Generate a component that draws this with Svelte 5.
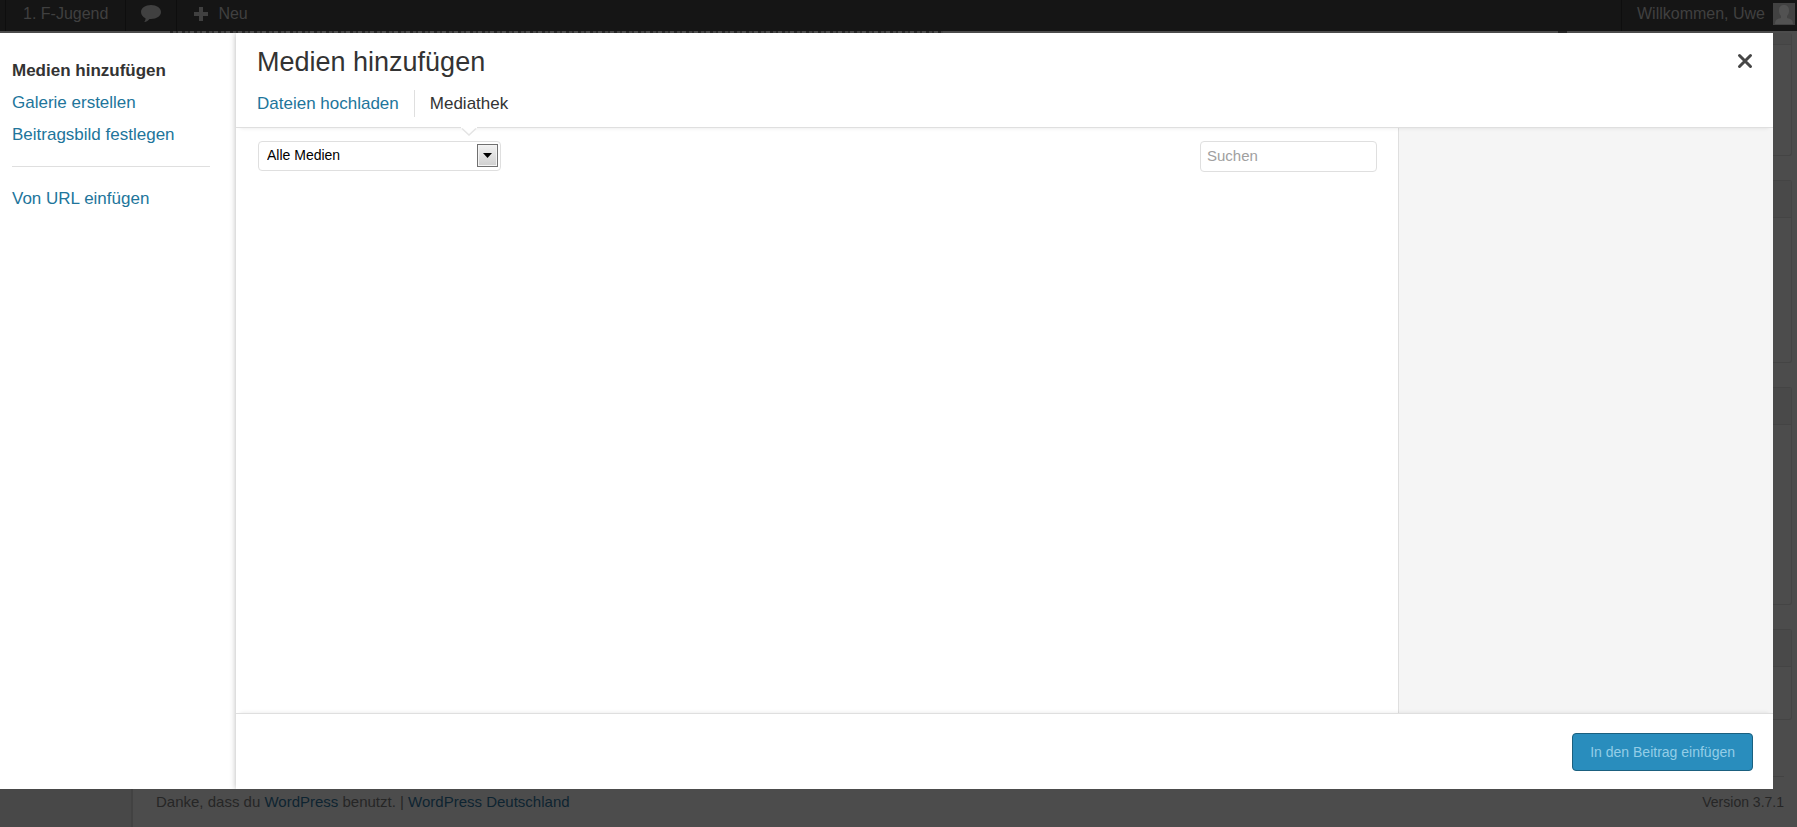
<script>
    let menuItems = [
        { id: 'insert', label: 'Medien hinzufügen' },
        { id: 'gallery', label: 'Galerie erstellen' },
        { id: 'featured', label: 'Beitragsbild festlegen' }
    ];

    let tabs = [
        { id: 'upload', label: 'Dateien hochladen' },
        { id: 'library', label: 'Mediathek' }
    ];

    // Dimmed sidebar widgets next to the dialog: title bar and total height
    let widgets = [
        { title: 12, height: 123 },
        { title: 37, height: 183 },
        { title: 37, height: 218 },
        { title: 37, height: 91 }
    ];

    let activeItem = $state('insert');
    let activeTab = $state('library');
    let filter = $state('all');
    let search = $state('');
</script>

<div class="page">
    <header class="adminbar">
        <a class="bar-item site" href="#site">1. F-Jugend</a>
        <a class="bar-item comments" href="#comments" aria-label="Kommentare">
            <svg width="20" height="17" viewBox="0 0 20 17">
                <path d="M10 0C4.400 0 0 3 0 7c0 3 2 5 4.500 6.200C4.600 14.800 4 16 3.200 17c2.400-.3 4.300-1.500 5.300-3.100H10c5.600 0 10-2.900 10-6.900S15.600 0 10 0z" />
            </svg>
        </a>
        <a class="bar-item new" href="#new">
            <svg width="14" height="14" viewBox="0 0 14 14">
                <path d="M5 0h4v5h5v4H9v5H5V9H0V5h5z" />
            </svg>
            Neu
        </a>
        <a class="bar-item account" href="#account">
            Willkommen, Uwe
            <svg class="avatar" width="22" height="22" viewBox="0 0 22 22">
                <rect width="22" height="22" fill="#424242" />
                <path d="M2 21c0-4 2-5 6-6v-2C6 11 6 9 6 7c0-3 2-5 5-5s5 2 5 5c0 2 0 4-2 6v2c4 1 6 2 6 6z" fill="#525252" />
            </svg>
        </a>
    </header>

    <div class="backdrop-top">
        <span class="cut-text"></span>
        <span class="cut-mark"></span>
    </div>

    <div class="middle">
        <div class="modal" role="dialog" aria-labelledby="modal-title">
            <nav class="menu">
                {#each menuItems as item}
                    <a
                        href="#{item.id}"
                        class:active={activeItem === item.id}
                        onclick={() => (activeItem = item.id)}
                    >{item.label}</a>
                {/each}
                <hr />
                <a
                    href="#embed"
                    class:active={activeItem === 'embed'}
                    onclick={() => (activeItem = 'embed')}
                >Von URL einfügen</a>
            </nav>

            <main class="frame">
                <div class="frame-head">
                    <div class="title-row">
                        <h1 id="modal-title">Medien hinzufügen</h1>
                        <button class="close" aria-label="Schließen">
                            <svg width="16" height="16" viewBox="0 0 16 16">
                                <path d="M2.500 2.500l11 11M13.500 2.500l-11 11" />
                            </svg>
                        </button>
                    </div>
                    <div class="tabs">
                        {#each tabs as tab}
                            <a
                                href="#{tab.id}"
                                class:active={activeTab === tab.id}
                                onclick={() => (activeTab = tab.id)}
                            >
                                {tab.label}
                                {#if activeTab === tab.id}
                                    <svg class="pointer" width="16" height="9" viewBox="0 0 16 9">
                                        <path d="M0 0v1l8 7 8-7V0z" fill="#fff" />
                                        <path d="M1 1.500l7 6.500 7-6.500" fill="none" stroke="#e4e4e4" stroke-width="1.500" />
                                    </svg>
                                {/if}
                            </a>
                        {/each}
                    </div>
                </div>

                <div class="content">
                    <div class="library">
                        <div class="select-wrap">
                            <select bind:value={filter} aria-label="Medien filtern">
                                <option value="all">Alle Medien</option>
                                <option value="image">Bilder</option>
                                <option value="audio">Audio</option>
                                <option value="video">Videos</option>
                            </select>
                            <span class="arrow">
                                <svg width="9" height="5" viewBox="0 0 9 5">
                                    <path d="M0 0h9L4.500 5z" />
                                </svg>
                            </span>
                        </div>
                        <input type="search" placeholder="Suchen" aria-label="Suchen" bind:value={search} />
                    </div>
                    <aside class="details"></aside>
                </div>

                <div class="toolbar">
                    <button class="primary">In den Beitrag einfügen</button>
                </div>
            </main>
        </div>

        <div class="behind">
            {#each widgets as widget}
                <div class="widget" style="height: {widget.height}px">
                    <div class="widget-title" style="height: {widget.title}px"></div>
                </div>
            {/each}
            <div class="rule"></div>
        </div>
    </div>

    <footer>
        <div class="menu-back"></div>
        <p>
            Danke, dass du <a href="#wordpress">WordPress</a> benutzt. | <a href="#deutschland">WordPress Deutschland</a>
        </p>
        <p class="version">Version 3.7.1</p>
    </footer>
</div>

<style>
    :global(body) {
        margin: 0;
        background: #4c4c4c;
    }

    .page {
        display: flex;
        flex-direction: column;
        min-height: 100vh;
        font-family: "Liberation Sans", Arial, sans-serif;
        font-size: 17px;
        color: #333;
    }

    a {
        color: #21759b;
        text-decoration: none;
    }

    .adminbar {
        display: flex;
        height: 31px;
        padding-left: 5px;
        background: #151515;
    }

    .bar-item {
        display: flex;
        align-items: center;
        box-sizing: border-box;
        padding-bottom: 4px;
        border-left: 1px solid #0e0e0e;
        color: #404040;
        font-size: 16px;
    }

    .bar-item svg {
        fill: #404040;
    }

    .site {
        padding-left: 17px;
        padding-right: 17px;
    }

    .comments {
        padding-left: 15px;
        padding-right: 15px;
    }

    .new {
        gap: 10px;
        padding-left: 17px;
    }

    .account {
        gap: 8px;
        margin-left: auto;
        padding-left: 15px;
        padding-right: 2px;
    }

    .backdrop-top {
        display: flex;
        height: 2px;
    }

    /* Lower edge of the editor notice, cut off between bar and dialog */
    .cut-text {
        width: 43%;
        margin-left: 170px;
        background: repeating-linear-gradient(90deg, #262626 0 3px, #444 3px 6px, #2c2c2c 6px 8px, #4c4c4c 8px 12px);
    }

    .cut-mark {
        width: 9px;
        margin-left: auto;
        margin-right: 230px;
        background: #262626;
    }

    .middle {
        display: flex;
        flex: 1;
    }

    .modal {
        display: flex;
        flex: 1;
        background: #fff;
    }

    .menu {
        width: 200px;
        padding: 22px 24px 0 12px;
    }

    .menu a {
        display: block;
        line-height: 32px;
    }

    .menu a.active {
        color: #333;
        font-weight: bold;
    }

    .menu hr {
        height: 1px;
        margin: 15px 2px 16px 0;
        border: 0;
        background: #dfdfdf;
    }

    .frame {
        display: flex;
        flex: 1;
        flex-direction: column;
        box-shadow: 0 0 6px rgba(0, 0, 0, 0.3);
        clip-path: inset(0 0 0 -12px);
    }

    .frame-head {
        position: relative;
        z-index: 1;
        padding: 0 20px 0 21px;
        border-bottom: 1px solid #dfdfdf;
        box-shadow: 0 4px 4px -4px rgba(0, 0, 0, 0.1);
    }

    .title-row {
        display: flex;
        justify-content: space-between;
        align-items: center;
        height: 57px;
    }

    h1 {
        margin: 0;
        padding-top: 2px;
        font-size: 27px;
        font-weight: normal;
    }

    .close {
        display: flex;
        padding: 0 0 2px;
        border: 0;
        background: none;
    }

    .close path {
        stroke: #464646;
        stroke-width: 3;
        stroke-linecap: round;
    }

    .tabs {
        display: flex;
        height: 37px;
    }

    .tabs a {
        position: relative;
        height: 27px;
        padding: 0 15px;
        line-height: 27px;
    }

    .tabs a:first-child {
        padding-left: 0;
    }

    .tabs a + a {
        border-left: 1px solid #dfdfdf;
    }

    .tabs a.active {
        color: #333;
    }

    .pointer {
        position: absolute;
        top: 37px;
        left: calc(50% - 8px);
    }

    .content {
        display: flex;
        flex: 1;
    }

    .library {
        display: flex;
        flex: 1;
        justify-content: space-between;
        align-items: flex-start;
        padding: 13px 21px 0 22px;
    }

    .select-wrap {
        position: relative;
    }

    select,
    input {
        box-sizing: border-box;
        height: 31px;
        margin: 0;
        border: 1px solid #dfdfdf;
        border-radius: 4px;
        background: #fff;
        font-family: inherit;
    }

    select {
        display: block;
        width: 243px;
        height: 30px;
        padding: 0 30px 2px 8px;
        appearance: none;
        color: #000;
        font-size: 14px;
    }

    .arrow {
        position: absolute;
        top: 3px;
        right: 3px;
        display: flex;
        justify-content: center;
        align-items: center;
        box-sizing: border-box;
        width: 21px;
        height: 23px;
        border: 1px solid #707070;
        background: linear-gradient(#f2f2f2, #cfcfcf);
        box-shadow: inset 0 0 0 1px #f4f4f4;
        pointer-events: none;
    }

    input {
        width: 177px;
        padding: 0 6px 2px;
        appearance: none;
        color: #333;
        font-size: 15px;
    }

    input::placeholder {
        color: #a0a0a0;
        opacity: 1;
    }

    .details {
        width: 374px;
        border-left: 1px solid #dfdfdf;
        background: #f5f5f5;
    }

    .toolbar {
        display: flex;
        justify-content: flex-end;
        padding: 19px 20px 18px;
        border-top: 1px solid #dfdfdf;
        box-shadow: 0 -4px 4px -4px rgba(0, 0, 0, 0.1);
    }

    .primary {
        height: 38px;
        padding: 0 17px;
        border: 1px solid #1b607f;
        border-radius: 4px;
        background: #298dbd;
        color: #94cde7;
        font-family: inherit;
        font-size: 14px;
    }

    .behind {
        display: flex;
        flex-direction: column;
        gap: 24px;
        width: 24px;
    }

    .widget {
        box-sizing: border-box;
        width: 19px;
        border: 1px solid #444;
        border-left: 0;
        border-radius: 0 3px 3px 0;
    }

    .widget:first-child {
        border-top: 0;
    }

    .widget-title {
        box-sizing: border-box;
        border-bottom: 1px solid #444;
        background: #494949;
    }

    .rule {
        width: 11px;
        margin-top: 32px;
        border-top: 1px solid #434343;
    }

    footer {
        display: flex;
        height: 38px;
        color: #262626;
        font-size: 15px;
        line-height: 26px;
    }

    footer p {
        margin: 0 0 0 23px;
    }

    footer a {
        color: #0e2431;
    }

    .menu-back {
        width: 131px;
        border-right: 2px solid #424242;
        background: #484848;
    }

    footer .version {
        margin-left: auto;
        margin-right: 13px;
        font-size: 14px;
    }
</style>
